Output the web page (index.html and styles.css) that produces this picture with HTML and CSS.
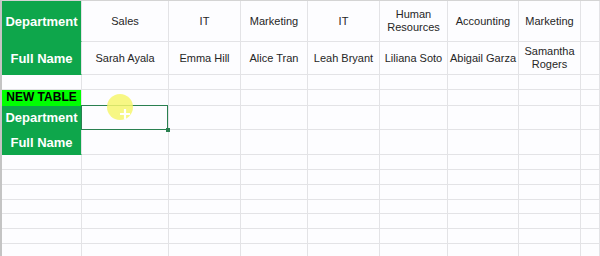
FILE: index.html
```html
<!DOCTYPE html>
<html>
<head>
<meta charset="utf-8">
<link rel="stylesheet" href="styles.css">
</head>
<body>
<div class="sheet">
  <div class="grid">
    <div class="c hdr">Department</div>
    <div class="c">Sales</div>
    <div class="c">IT</div>
    <div class="c">Marketing</div>
    <div class="c">IT</div>
    <div class="c">Human Resources</div>
    <div class="c">Accounting</div>
    <div class="c">Marketing</div>
    <div class="c"></div>

    <div class="c hdr">Full Name</div>
    <div class="c">Sarah Ayala</div>
    <div class="c">Emma Hill</div>
    <div class="c">Alice Tran</div>
    <div class="c">Leah Bryant</div>
    <div class="c">Liliana Soto</div>
    <div class="c">Abigail Garza</div>
    <div class="c">Samantha Rogers</div>
    <div class="c"></div>

    <div class="c"></div><div class="c"></div><div class="c"></div><div class="c"></div><div class="c"></div><div class="c"></div><div class="c"></div><div class="c"></div><div class="c"></div>

    <div class="c lime">NEW TABLE</div>
    <div class="c"></div><div class="c"></div><div class="c"></div><div class="c"></div><div class="c"></div><div class="c"></div><div class="c"></div><div class="c"></div>

    <div class="c hdr">Department</div>
    <div class="c"></div><div class="c"></div><div class="c"></div><div class="c"></div><div class="c"></div><div class="c"></div><div class="c"></div><div class="c"></div>

    <div class="c hdr">Full Name</div>
    <div class="c"></div><div class="c"></div><div class="c"></div><div class="c"></div><div class="c"></div><div class="c"></div><div class="c"></div><div class="c"></div>

    <div class="c"></div><div class="c"></div><div class="c"></div><div class="c"></div><div class="c"></div><div class="c"></div><div class="c"></div><div class="c"></div><div class="c"></div>
    <div class="c"></div><div class="c"></div><div class="c"></div><div class="c"></div><div class="c"></div><div class="c"></div><div class="c"></div><div class="c"></div><div class="c"></div>
    <div class="c"></div><div class="c"></div><div class="c"></div><div class="c"></div><div class="c"></div><div class="c"></div><div class="c"></div><div class="c"></div><div class="c"></div>
    <div class="c"></div><div class="c"></div><div class="c"></div><div class="c"></div><div class="c"></div><div class="c"></div><div class="c"></div><div class="c"></div><div class="c"></div>
    <div class="c"></div><div class="c"></div><div class="c"></div><div class="c"></div><div class="c"></div><div class="c"></div><div class="c"></div><div class="c"></div><div class="c"></div>
    <div class="c"></div><div class="c"></div><div class="c"></div><div class="c"></div><div class="c"></div><div class="c"></div><div class="c"></div><div class="c"></div><div class="c"></div>
    <div class="c"></div><div class="c"></div><div class="c"></div><div class="c"></div><div class="c"></div><div class="c"></div><div class="c"></div><div class="c"></div><div class="c"></div>
  </div>
  <div class="selection"><span class="handle"></span></div>
  <div class="cursor">
    <svg width="10" height="10" viewBox="0 0 10 10"><path d="M5 1v8M1 5h8" stroke="#fff" stroke-width="2.2" stroke-linecap="square"/></svg>
  </div>
</div>
</body>
</html>
```

FILE: styles.css
```css
html, body {
  margin: 0;
  padding: 0;
  background: #fff;
}
body {
  width: 600px;
  height: 256px;
  overflow: hidden;
  font-family: "Liberation Sans", Arial, sans-serif;
}
.sheet {
  position: relative;
  height: 256px;
  border-top: 1px solid #d4d4d4;
  border-left: 2px solid #c4c4c4;
  box-sizing: border-box;
  background: #fdfdff;
}
.grid {
  display: grid;
  grid-template-columns: 80px 87px 72px 67px 72px 68px 71px 62px 1fr;
  grid-template-rows: 41px 33px 15px 16px 24px 25px 15px 15px 15px 14px 15px 15px 15px;
}
.c {
  box-sizing: border-box;
  border-right: 1px solid #e3e3e6;
  border-bottom: 1px solid #e3e3e6;
  display: flex;
  align-items: center;
  justify-content: center;
  text-align: center;
  font-size: 11px;
  line-height: 13px;
  color: #262626;
  padding: 0 1px;
  overflow: hidden;
}
.hdr {
  background: #0ea64b;
  border-bottom-color: #0ea64b;
  color: #fff;
  font-weight: bold;
  font-size: 13px;
  padding: 0;
}
.lime {
  background: #00ff00;
  border-bottom-color: #00ff00;
  color: #000;
  font-weight: bold;
  font-size: 12px;
  padding: 0;
  white-space: nowrap;
}
.selection {
  position: absolute;
  left: 79px;
  top: 104px;
  width: 87px;
  height: 25px;
  border: 1px solid #2a8050;
  box-sizing: border-box;
}
.handle {
  position: absolute;
  right: -3px;
  bottom: -3px;
  width: 4px;
  height: 4px;
  background: #2a8050;
}
.cursor {
  position: absolute;
  left: 105px;
  top: 93px;
  width: 26px;
  height: 26px;
  border-radius: 50%;
  background: rgba(246, 246, 110, 0.85);
}
.cursor svg {
  position: absolute;
  left: 13px;
  top: 15px;
}
```
